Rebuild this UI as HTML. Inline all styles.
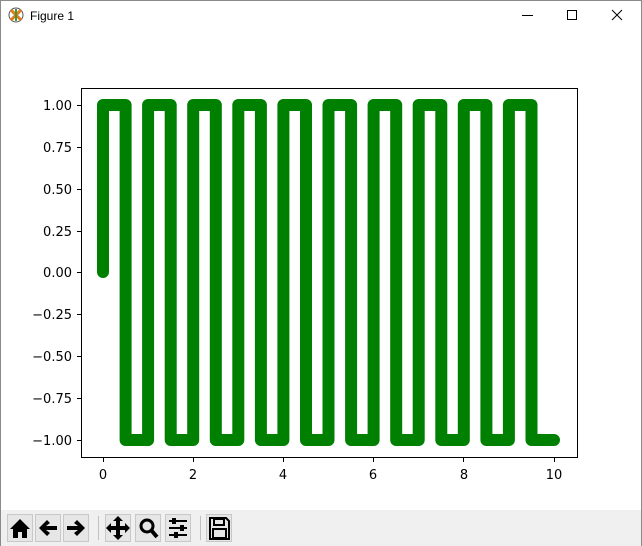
<!DOCTYPE html>
<html><head><style>
body{margin:0;width:642px;height:546px;overflow:hidden;background:#fff;font-family:"DejaVu Sans","Liberation Sans",sans-serif;position:relative}
.win{position:absolute;left:0;top:0;width:640px;height:545px;border:1px solid #8a8a8a;border-bottom:none}
.tb{position:absolute;left:1px;top:510px;width:640px;height:36px;background:#f0f0f0}
.btn{position:absolute;top:4px;width:26px;height:28px;background:#e6e6e6;border:1px solid #c8c8c8;box-sizing:border-box}
.sep{position:absolute;top:6px;width:1px;height:24px;background:#c0c0c0}
</style></head><body>
<div class="win"></div>
<svg width="642" height="40" style="position:absolute;left:0;top:0">
<circle cx="16" cy="15" r="7" fill="#fff" stroke="#555" stroke-width="1"/>
<path d="M11 10 L21 20 M21 10 L11 20" stroke="#e07a1a" stroke-width="3"/>
<path d="M16 9 V21" stroke="#3a9a3a" stroke-width="2"/>
<text x="30" y="20" font-family="Liberation Sans,sans-serif" font-size="12" fill="#000">Figure 1</text>
<path d="M522 15.5 H533" stroke="#000" stroke-width="1"/>
<rect x="567.5" y="10.5" width="9" height="9" fill="none" stroke="#000"/>
<path d="M612 10 L622 20 M622 10 L612 20" stroke="#000" stroke-width="1"/>
</svg>
<svg width="642" height="546" style="position:absolute;left:0;top:0" font-family="DejaVu Sans,sans-serif" font-size="13">
<rect x="81.5" y="88.5" width="496" height="369" fill="none" stroke="#000" stroke-width="1"/>
<path d="M103 272 V105 H125.6 V440 H148.1 V105 H170.7 V440 H193.2 V105 H215.8 V440 H238.3 V105 H260.9 V440 H283.4 V105 H306 V440 H328.5 V105 H351.1 V440 H373.6 V105 H396.2 V440 H418.7 V105 H441.3 V440 H463.8 V105 H486.4 V440 H508.9 V105 H531.5 V440 H554" fill="none" stroke="#008000" stroke-width="12" stroke-linejoin="round" stroke-linecap="round"/>
<g stroke="#000">
<path d="M77 105.5H81M77 147.5H81M77 189.5H81M77 231.5H81M77 272.5H81M77 314.5H81M77 356.5H81M77 398.5H81M77 440.5H81"/>
<path d="M103.5 458V462M193.5 458V462M283.5 458V462M373.5 458V462M463.5 458V462M554.5 458V462"/>
</g>
<g text-anchor="end" fill="#000">
<text x="72" y="110">1.00</text><text x="72" y="152">0.75</text><text x="72" y="194">0.50</text><text x="72" y="236">0.25</text><text x="72" y="277">0.00</text><text x="72" y="319">−0.25</text><text x="72" y="361">−0.50</text><text x="72" y="403">−0.75</text><text x="72" y="445">−1.00</text>
</g>
<g text-anchor="middle" fill="#000">
<text x="103" y="479">0</text><text x="193" y="479">2</text><text x="283" y="479">4</text><text x="373" y="479">6</text><text x="464" y="479">8</text><text x="554" y="479">10</text>
</g>
</svg>
<div class="tb">
<div class="btn" style="left:6px"></div><div class="btn" style="left:34px"></div><div class="btn" style="left:62px"></div>
<div class="sep" style="left:97px"></div>
<div class="btn" style="left:104px"></div><div class="btn" style="left:134px"></div><div class="btn" style="left:164px"></div>
<div class="sep" style="left:199px"></div>
<div class="btn" style="left:205px"></div>
</div>
<svg width="642" height="36" style="position:absolute;left:0;top:510px">
<path d="M10 19 L20 9 L30 19 L27 19 L27 28 L22 28 L22 22 L18 22 L18 28 L13 28 L13 19 Z" fill="#000"/>
<path d="M39 18 L47 10 L50 13 L46 16 H57 V20 H46 L50 23 L47 26 Z" fill="#000"/>
<path d="M85 18 L77 10 L74 13 L78 16 H67 V20 H78 L74 23 L77 26 Z" fill="#000"/>
<path d="M118 6 L123 11 H120 V16 H125 V13 L130 18 L125 23 V20 H120 V25 H123 L118 30 L113 25 H116 V20 H111 V23 L106 18 L111 13 V16 H116 V11 H113 Z" fill="#000"/>
<circle cx="147" cy="16" r="6" fill="none" stroke="#000" stroke-width="3"/>
<path d="M151 20 L157 27" stroke="#000" stroke-width="4"/>
<path d="M169 11 H187 M169 18 H187 M169 25 H187" stroke="#000" stroke-width="2"/>
<rect x="172" y="8" width="4" height="6" fill="#000"/><rect x="180" y="15" width="4" height="6" fill="#000"/><rect x="174" y="22" width="4" height="6" fill="#000"/>
<path d="M210 8 H226 L229 11 V29 H210 Z" fill="none" stroke="#000" stroke-width="2"/>
<rect x="214" y="9" width="10" height="6" fill="none" stroke="#000" stroke-width="2"/>
<rect x="213" y="19" width="13" height="9" fill="none" stroke="#000" stroke-width="2"/>
</svg>
</body></html>
